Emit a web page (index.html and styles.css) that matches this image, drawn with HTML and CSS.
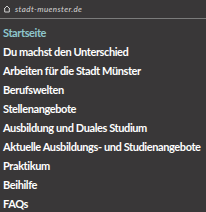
FILE: index.html
```html
<!DOCTYPE html>
<html lang="de">
<head>
<meta charset="utf-8">
<link rel="stylesheet" href="styles.css">
</head>
<body>
<div class="menu">
  <div class="site">
    <svg class="home" width="8" height="8" viewBox="0 0 8 8"><path d="M1 4 L4 1 L7 4 M1.7 3.4 V7 H6.3 V3.4" fill="none" stroke="#cfcfcf" stroke-width="1"/></svg>
    <span class="domain">stadt-muenster.de</span>
  </div>
  <ul class="nav">
    <li class="item active">Startseite</li>
    <li class="item">Du machst den Unterschied</li>
    <li class="item">Arbeiten für die Stadt Münster</li>
    <li class="item">Berufswelten</li>
    <li class="item">Stellenangebote</li>
    <li class="item">Ausbildung und Duales Studium</li>
    <li class="item">Aktuelle Ausbildungs- und Studienangebote</li>
    <li class="item">Praktikum</li>
    <li class="item">Beihilfe</li>
    <li class="item">FAQs</li>
  </ul>
</div>
</body>
</html>
```
FILE: styles.css
```css
html, body {
  margin: 0;
  padding: 0;
  background: #393738;
}
.menu {
  width: 206px;
  height: 212px;
  overflow: hidden;
  font-family: Lato, "Open Sans", sans-serif;
}
.site {
  display: flex;
  align-items: center;
  gap: 4px;
  height: 18px;
  padding-left: 3px;
  border-bottom: 1px solid #7b7b7b;
}
.home {
  display: block;
}
.domain {
  font-size: 8px;
  font-style: italic;
  letter-spacing: 0.4px;
  color: #d6d6d6;
}
.nav {
  list-style: none;
  margin: 0;
  padding: 4px 0 0 3px;
}
.item {
  height: 19px;
  line-height: 19px;
  font-size: 11px;
  letter-spacing: -0.4px;
  font-weight: 700;
  color: #ffffff;
  white-space: nowrap;
}
.item.active {
  color: #8ec6cc;
}
```
